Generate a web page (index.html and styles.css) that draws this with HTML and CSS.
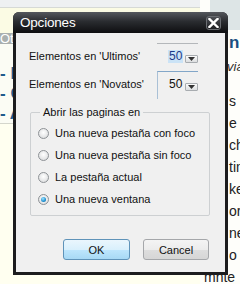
FILE: index.html
```html
<!DOCTYPE html>
<html>
<head>
<meta charset="utf-8">
<link rel="stylesheet" href="styles.css">
</head>
<body>
<div class="page">
  <div class="left">
    <div class="strip"></div>
    <div class="yel"></div>
    <div class="bar">Otros</div>
    <div class="links">
      <div>- Foros</div>
      <div>- Grupos</div>
      <div>- Ayuda</div>
    </div>
    <div class="rest"></div>
  </div>
  <div class="right">
    <div class="rbox"></div>
    <div class="rhead">n</div>
    <div class="rsub">via</div>
    <div class="rtext">
      <div class="rl">s c</div>
      <div class="rl">e s</div>
      <div class="rl">ch</div>
      <div class="rl">tim</div>
      <div class="rl">ke</div>
      <div class="rl">or</div>
      <div class="rl">ne</div>
      <div class="rl">o</div>
      <div class="rl last">mnte</div>
    </div>
  </div>
</div>

<div class="dialog">
  <div class="titlebar">
    <span class="title">Opciones</span>
    <span class="close"><svg width="11" height="10" viewBox="0 0 11 10"><path d="M1.5 1 L9.5 9 M9.5 1 L1.5 9" stroke="#fff" stroke-width="2.4" stroke-linecap="square"/></svg></span>
  </div>
  <div class="body">
    <div class="row">
      <span class="label">Elementos en 'Ultimos'</span>
      <div class="spin first"><span class="val sel">50</span><span class="drop"><svg width="7" height="4" viewBox="0 0 7 4"><path d="M0 0 H7 L3.5 4 Z" fill="#333"/></svg></span></div>
    </div>
    <div class="row">
      <span class="label">Elementos en 'Novatos'</span>
      <div class="spin second"><span class="val">50</span><span class="drop"><svg width="7" height="4" viewBox="0 0 7 4"><path d="M0 0 H7 L3.5 4 Z" fill="#333"/></svg></span></div>
    </div>
    <fieldset class="group">
      <legend>Abrir las paginas en</legend>
      <div class="radio"><span class="dot"></span>Una nueva pestaña con foco</div>
      <div class="radio"><span class="dot"></span>Una nueva pestaña sin foco</div>
      <div class="radio"><span class="dot"></span>La pestaña actual</div>
      <div class="radio"><span class="dot on"></span>Una nueva ventana</div>
    </fieldset>
    <div class="buttons">
      <button class="btn ok">OK</button>
      <button class="btn">Cancel</button>
    </div>
  </div>
</div>
</body>
</html>
```

FILE: styles.css
```css
html, body {
  margin: 0;
  padding: 0;
}
body {
  width: 240px;
  height: 284px;
  overflow: hidden;
  position: relative;
  font-family: "Liberation Sans", Arial, sans-serif;
  background: #fffff2;
}
.page {
  display: flex;
  height: 284px;
}
.left {
  width: 200px;
  display: flex;
  flex-direction: column;
  background: #fdfdf2;
}
.strip {
  height: 7px;
  background: #eef0f2;
  border-bottom: 1px solid #d6d9d6;
}
.yel {
  height: 25px;
  background: #fbfbe4;
}
.bar {
  height: 11px;
  background: #a9afae;
  color: #fff;
  font-size: 13px;
  line-height: 11px;
  overflow: hidden;
}
.links {
  height: 80px;
  box-sizing: border-box;
  padding-top: 20px;
  color: #1f5a8c;
  font-weight: bold;
  font-size: 17px;
  line-height: 20px;
  border-bottom: 1px solid #d4d6cc;
  background: #fbfcf4;
}
.rest {
  flex: 1;
  background: #fffff0;
}
.right {
  width: 40px;
  background: #fefefa;
  overflow: hidden;
  white-space: nowrap;
}
.rbox {
  height: 30px;
  margin-left: 10px;
  background: #dde5e6;
}
.rhead {
  margin-top: 3px;
  padding-left: 29px;
  height: 20px;
  line-height: 20px;
  color: #1a4f80;
  font-weight: bold;
  font-size: 17px;
}
.rsub {
  margin-top: 4px;
  padding-left: 27px;
  height: 20px;
  line-height: 20px;
  font-style: italic;
  font-size: 13px;
  color: #333;
}
.rtext {
  margin-top: 13px;
  font-size: 14px;
  color: #222;
}
.rl {
  height: 22px;
  line-height: 22px;
  padding-left: 29px;
}
.rl.last {
  padding-left: 4px;
}

/* dialog */
.dialog {
  position: absolute;
  left: 13px;
  top: 12px;
  width: 215px;
  height: 263px;
  box-sizing: border-box;
  background: #1c1c1e;
  border-radius: 6px 6px 0 0;
  padding: 0 3px 3px 3px;
  display: flex;
  flex-direction: column;
}
.titlebar {
  height: 21px;
  display: flex;
  align-items: center;
  justify-content: space-between;
  background: linear-gradient(#55585e, #2a2c30 45%, #0e0e10);
  margin: 0 -3px;
  padding: 0 7px 0 7px;
  border-radius: 6px 6px 0 0;
}
.title {
  color: #fff;
  font-size: 13.5px;
  letter-spacing: -0.2px;
}
.close {
  width: 15px;
  height: 14px;
  box-sizing: border-box;
  border: 1px solid #6a6d72;
  border-radius: 3px;
  background: linear-gradient(#4c4f55, #1e1f22);
  display: flex;
  align-items: center;
  justify-content: center;
  margin-top: 1px;
}
.body {
  flex: 1;
  background: #f0f0f0;
  padding-top: 10px;
  font-size: 11px;
  color: #111;
}
.row {
  height: 28px;
  display: flex;
  align-items: flex-start;
}
.label {
  margin-left: 13px;
  width: 128px;
  line-height: 26px;
}
.spin {
  width: 41px;
  height: 28px;
  box-sizing: border-box;
  border-top: 1px solid #b4b7ba;
  display: flex;
  align-items: center;
  padding-left: 11px;
}
.spin.second {
  border-top: 1px solid #82a6c8;
  border-left: 1px solid #a9c0d6;
  padding-left: 10px;
}
.val {
  font-size: 12px;
  line-height: 13px;
  padding: 0 1px;
  margin-top: -2px;
}
.val.sel {
  background: #cbe3f6;
  color: #1a3a8a;
}
.drop {
  width: 14px;
  height: 8px;
  box-sizing: border-box;
  border: 1px solid #a8acb0;
  border-radius: 1px;
  background: linear-gradient(#fbfbfb, #dcdee0);
  display: flex;
  align-items: center;
  justify-content: center;
  margin-left: 2px;
  margin-top: 2px;
}
.group {
  margin: 6px 15px 0 14px;
  padding: 3px 0 5px 7px;
  border: 1px solid #cdd0d2;
  border-radius: 2px;
  height: 111px;
  box-sizing: border-box;
}
.group legend {
  padding: 0 3px;
  margin-left: 2px;
  font-size: 11px;
  line-height: 14px;
}
.radio {
  height: 22px;
  display: flex;
  align-items: center;
  font-size: 11px;
}
.dot {
  width: 11px;
  height: 11px;
  box-sizing: border-box;
  border-radius: 50%;
  border: 1px solid #8e9296;
  background: radial-gradient(circle at 50% 40%, #ffffff, #e2e3e4 70%, #cfd1d3);
  margin-right: 6px;
  position: relative;
}
.dot.on::after {
  content: "";
  position: absolute;
  left: 2px;
  top: 2px;
  width: 5px;
  height: 5px;
  border-radius: 50%;
  background: radial-gradient(circle at 40% 35%, #9fe3ff, #1e8fcf 60%, #0a5a96);
}
.buttons {
  display: flex;
  justify-content: flex-end;
  gap: 13px;
  margin-top: 23px;
  padding-right: 16px;
}
.btn {
  width: 66px;
  height: 21px;
  font-family: "Liberation Sans", Arial, sans-serif;
  font-size: 11px;
  color: #111;
  border: 1px solid #a5a7aa;
  border-radius: 3px;
  background: linear-gradient(#f4f4f4, #ececec 50%, #dedede 51%, #d6d6d6);
  padding: 0;
}
.btn.ok {
  width: 67px;
  border-color: #5f93b9;
  background: linear-gradient(#eaf6fd, #d9f0fc 50%, #bee6fd 51%, #a7d9f5);
}
```
